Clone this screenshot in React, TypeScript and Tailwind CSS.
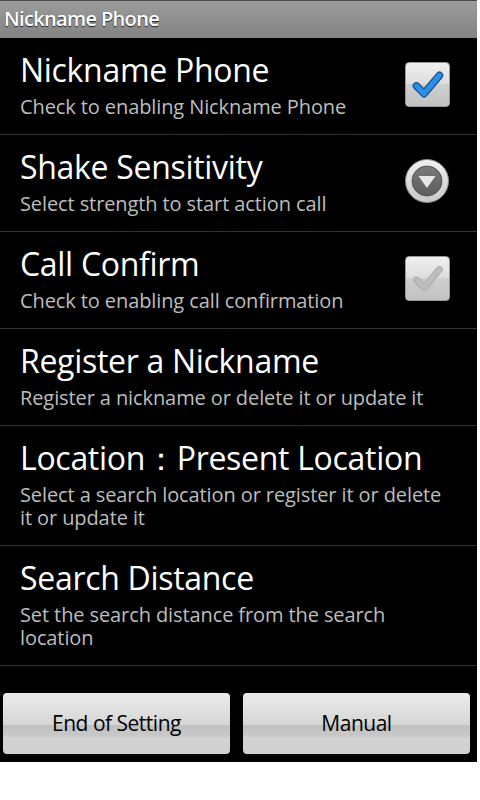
import React from "react";

type Pref = {
  title: string;
  summary: string;
  widget?: "checked" | "spinner" | "disabled";
};

const prefs: Pref[] = [
  { title: "Nickname Phone", summary: "Check to enabling Nickname Phone", widget: "checked" },
  { title: "Shake Sensitivity", summary: "Select strength to start action call", widget: "spinner" },
  { title: "Call Confirm", summary: "Check to enabling call confirmation", widget: "disabled" },
  { title: "Register a Nickname", summary: "Register a nickname or delete it or update it" },
  {
    title: "Location\uFF1APresent Location",
    summary: "Select a search location or register it or delete it or update it",
  },
  { title: "Search Distance", summary: "Set the search distance from the search location" },
];

function CheckBox({ enabled }: { enabled: boolean }) {
  return (
    <div className="relative h-[45px] w-[45px] overflow-hidden rounded-[4px] border border-[#9a9a9a] bg-gradient-to-b from-[#f0f0f0] via-[#dcdcdc] to-[#c9c9c9]">
      <div className="absolute inset-x-0 bottom-0 h-1/2 bg-gradient-to-b from-[#cfcfcf] to-[#c2c2c2]" />
      <svg viewBox="0 0 45 45" className="absolute inset-0 h-full w-full">
        {enabled ? (
          <>
            <path d="M11 24 L19 32 L35 13" fill="none" stroke="#14508f" strokeWidth="8" strokeLinecap="round" strokeLinejoin="round" />
            <path d="M11 24 L19 32 L35 13" fill="none" stroke="#2e8ee6" strokeWidth="5.5" strokeLinecap="round" strokeLinejoin="round" />
          </>
        ) : (
          <>
            <path d="M11 24 L19 32 L35 13" fill="none" stroke="#a9a9a9" strokeWidth="7" strokeLinecap="round" strokeLinejoin="round" />
            <path d="M11 24 L19 32 L35 13" fill="none" stroke="#bdbdbd" strokeWidth="5" strokeLinecap="round" strokeLinejoin="round" />
          </>
        )}
      </svg>
    </div>
  );
}

function Spinner() {
  return (
    <svg viewBox="0 0 46 46" className="h-[46px] w-[46px]">
      <defs>
        <linearGradient id="ring" x1="0" y1="0" x2="0" y2="1">
          <stop offset="0" stopColor="#f2f2f2" />
          <stop offset="1" stopColor="#c8c8c8" />
        </linearGradient>
        <linearGradient id="core" x1="0" y1="0" x2="0" y2="1">
          <stop offset="0" stopColor="#7a7a7a" />
          <stop offset="1" stopColor="#5c5c5c" />
        </linearGradient>
      </defs>
      <circle cx="23" cy="23" r="21.5" fill="url(#ring)" stroke="#8a8a8a" strokeWidth="1" />
      <circle cx="23" cy="23" r="15" fill="url(#core)" stroke="#555" strokeWidth="1" />
      <path d="M14.5 18 L31.5 18 L23 30 Z" fill="#e6e6e6" />
    </svg>
  );
}

export default function App() {
  return (
    <div
      className="flex min-h-[800px] w-[480px] bg-white"
      style={{ fontFamily: '"Open Sans", "Noto Sans", sans-serif' }}
    >
      <div className="flex h-[762px] w-[477px] flex-col bg-black">
        <div className="h-[38px] border-t border-[#4a4a4a] bg-gradient-to-b from-[#9c9c9c] to-[#838383] pl-[4px] text-[20px] font-semibold leading-[36px] tracking-[-0.65px] text-white [text-shadow:0_1px_1px_#222]">
          Nickname Phone
        </div>

        <div className="flex flex-col">
          {prefs.map((p) => (
            <div key={p.title} className="flex items-center border-b border-[#333333] pl-[20px] pr-[27px] pt-[12px] pb-[16px]">
              <div className="flex-1">
                <div className="text-[32px] leading-[40px] tracking-[-0.3px] text-white">{p.title}</div>
                <div className="mt-[5px] text-[20px] leading-[23px] tracking-[-0.1px] text-[#bdbdbd]">{p.summary}</div>
              </div>
              {p.widget === "checked" && <CheckBox enabled />}
              {p.widget === "disabled" && <CheckBox enabled={false} />}
              {p.widget === "spinner" && <Spinner />}
            </div>
          ))}
        </div>

        <div className="mt-auto flex gap-[13px] pb-[8px] pl-[3px] pr-[7px]">
          {["End of Setting", "Manual"].map((label) => (
            <button
              key={label}
              className="relative h-[61px] flex-1 overflow-hidden rounded-[4px] bg-gradient-to-b from-[#ececec] via-[#d6d6d6] to-[#d0d0d0] text-[21px] tracking-[-0.5px] text-black"
            >
              <span className="absolute inset-x-0 top-[52%] h-[12px] bg-gradient-to-b from-[#bfbfbf] to-[#cacaca]" />
              <span className="relative">{label}</span>
            </button>
          ))}
        </div>
      </div>
    </div>
  );
}
